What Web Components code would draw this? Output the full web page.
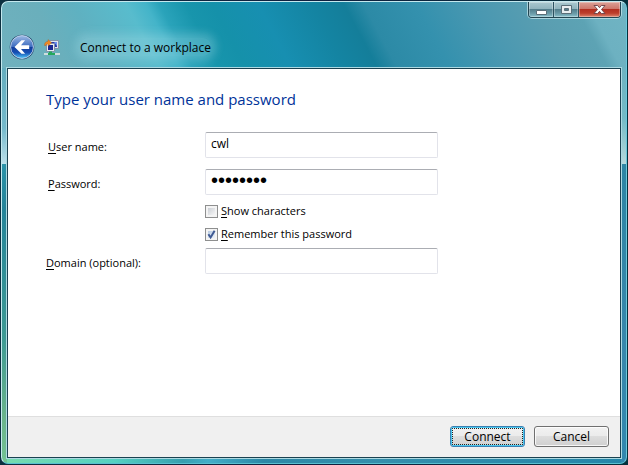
<!DOCTYPE html>
<html lang="en">
<head>
<meta charset="utf-8">
<title>Connect to a workplace</title>
<style>
    html, body {
        height: 100%;
        margin: 0;
    }
    body {
        background: linear-gradient(90deg, #0c3040, #102040 50%, #04303c);
        font: 12px/16px "Open Sans", "Noto Sans", sans-serif;
        color: #000;
    }
</style>
</head>
<body>
<aero-window>
    <nav-header slot="title">Connect to a workplace</nav-header>
    <window-controls slot="controls"></window-controls>
    <credentials-form heading="Type your user name and password"></credentials-form>
    <command-button slot="actions" primary>Connect</command-button>
    <command-button slot="actions">Cancel</command-button>
</aero-window>

<script>
// Glass frame with a title area, a white client area and a command bar
class AeroWindow extends HTMLElement {
    constructor() {
        super();
        this.attachShadow({ mode: 'open' });
    }

    connectedCallback() {
        this.shadowRoot.innerHTML = `
            <style>
                :host {
                    display: block;
                    height: 100%;
                    box-sizing: border-box;
                    padding: 1px;
                }
                .frame {
                    display: flex;
                    flex-direction: column;
                    height: 100%;
                    box-sizing: border-box;
                    border: 1px solid #c4e8ee;
                    border-right-color: #6cc8dc;
                    border-bottom-color: #58c0d0;
                    border-radius: 7px;
                    padding: 0 4px 4px;
                    background:
                        linear-gradient(62deg, #70b1be 0, #6aafbc 10%, #5fb1c1 16%, #58bccd 24%, #44b4c9 27%, #2aa3ba 29%, #1895ac 33%, #1591aa 37%, #178fb1 44%, #1484a2 52%, #147e9a 57%, #2c8aa6 60%, #3491ae 68%, #4a98b1 77%, #5a9eb1 86%, #5da3b4 92%, #6db1c1 94%, #70b4c3) 0 0 / 100% 66px no-repeat,
                        linear-gradient(#64adbe, #74b9cb 60px, #bce0eb 96px, #2b93a9 96px, #24849a 140px, #3d9a94 270px, #6ab48b 350px, #80d8a0) 0 66px / 5px 100% no-repeat,
                        linear-gradient(#6db3c1, #74bac6 50px, #b4d8dc 96px, #2d85a4 96px, #3887ac 60%, #2e87b0) 100% 66px / 5px 100% no-repeat,
                        linear-gradient(90deg, #78dcae, #55d1c1 18%, #379faf 29%, #43aec8 33%, #2c88a6 42%, #358fac 60%, #2586a9);
                }
                .top {
                    display: flex;
                    justify-content: space-between;
                    align-items: flex-start;
                    height: 65px;
                }
                .client {
                    flex: 1;
                    display: flex;
                    flex-direction: column;
                    border: 1px solid #1b4251;
                    outline: 1px solid #acd9e2;
                    margin: 1px;
                    background: #fff;
                }
                main {
                    flex: 1;
                }
                footer {
                    display: flex;
                    justify-content: flex-end;
                    gap: 9px;
                    padding: 9px 11px 10px;
                    border-top: 1px solid #dfdfdf;
                    background: #f0f0f0;
                }
            </style>
            <div class="frame">
                <div class="top">
                    <slot name="title"></slot>
                    <slot name="controls"></slot>
                </div>
                <div class="client">
                    <main><slot></slot></main>
                    <footer><slot name="actions"></slot></footer>
                </div>
            </div>
        `;
    }
}

class NavHeader extends HTMLElement {
    constructor() {
        super();
        this.attachShadow({ mode: 'open' });
    }

    connectedCallback() {
        this.shadowRoot.innerHTML = `
            <style>
                :host {
                    display: flex;
                    align-items: center;
                    align-self: flex-end;
                    padding: 0 0 7px 3px;
                }
                button {
                    width: 26px;
                    height: 26px;
                    padding: 0;
                    border: 0;
                    background: none;
                }
                svg {
                    display: block;
                }
                .place {
                    margin-left: 9px;
                }
                .title {
                    margin-left: 20px;
                    padding-top: 2px;
                    border-radius: 8px;
                    background: rgba(170, 222, 232, .3);
                    box-shadow: 0 0 8px 5px rgba(170, 222, 232, .3);
                }
            </style>
            <button type="button" aria-label="Back">
                <svg width="26" height="26" viewBox="0 0 26 26">
                    <defs>
                        <linearGradient id="ball" x2="0" y2="1">
                            <stop offset="0" stop-color="#9db9e4"/>
                            <stop offset=".48" stop-color="#3f6dc0"/>
                            <stop offset=".5" stop-color="#123c9c"/>
                            <stop offset=".75" stop-color="#1750b4"/>
                            <stop offset="1" stop-color="#4fc8f8"/>
                        </linearGradient>
                    </defs>
                    <circle cx="13" cy="13" r="12.3" fill="#26466f"/>
                    <circle cx="13" cy="13" r="11.4" fill="url(#ball)" stroke="#c4d8ee" stroke-width=".9"/>
                    <path d="M5.5 13 12.5 6.3h3.6L12 11.2h8.2v3.7H12l4.1 4.8h-3.6z" fill="#fff"/>
                </svg>
            </button>
            <svg class="place" width="16" height="17" viewBox="0 0 16 17">
                <path d="M5.5 1.5h9v8h-9z" fill="#dfe4ee" stroke="#8490aa"/>
                <path d="M7 3h6v5H7z" fill="#2638a8"/>
                <path d="M2.5 4.5h8v8h-8z" fill="#e8ebf2" stroke="#8490aa"/>
                <path d="M4 6h5v5H4z" fill="#1c2790"/>
                <path d="M10 3h3v4z" fill="#6f8ff0"/>
                <path d="M.5 6.5C.5 3.5 2 2.5 4 2.5V.6L7.6 3.8 4 7V5C2.6 5 2 5.5 2 6.5z" fill="#f08a26" stroke="#a85b18" stroke-width=".4"/>
                <path d="M0 14h16v2H0z" fill="#cfdede"/>
                <path d="M5 12.5h3V14h3v2H4v-2h1z" fill="#26a85a"/>
            </svg>
            <span class="title"><slot></slot></span>
        `;
    }
}

class WindowControls extends HTMLElement {
    constructor() {
        super();
        this.attachShadow({ mode: 'open' });
    }

    connectedCallback() {
        this.shadowRoot.innerHTML = `
            <style>
                :host {
                    display: flex;
                    height: 15px;
                    margin-right: 1px;
                    border: 1px solid #234652;
                    border-top: 0;
                    border-radius: 0 0 4px 4px;
                    box-shadow: 0 0 0 1px rgba(200, 232, 238, .7);
                    overflow: hidden;
                }
                button {
                    display: flex;
                    align-items: center;
                    justify-content: center;
                    width: 25px;
                    padding: 0;
                    border: 0;
                    border-right: 1px solid #2c5260;
                    background: linear-gradient(#a9c8cf, #8eb2bc 48%, #537f8d 50%, #6d9eab 80%, #8dc3ce);
                    box-shadow: inset 0 0 0 1px rgba(255, 255, 255, .3);
                }
                .close {
                    width: 41px;
                    border-right: 0;
                    background: linear-gradient(#dba197, #cd7468 48%, #b32f20 50%, #bd3f2c 75%, #dd8770);
                }
            </style>
            <button type="button" aria-label="Minimize">
                <svg width="13" height="13"><path d="M1.5 7.5h10v4h-10z" fill="#fff" stroke="#5a6e78"/></svg>
            </button>
            <button type="button" aria-label="Maximize">
                <svg width="13" height="13"><path d="M1.5 2.5h10v8h-10zM4.5 5.5v2h4v-2z" fill="#e8eef0" fill-rule="evenodd" stroke="#5a6e78"/></svg>
            </button>
            <button type="button" class="close" aria-label="Close">
                <svg width="13" height="13"><path d="M1 2.5h3.6l1.9 2.2 1.9-2.2H12L8.5 6.5l3.5 4H8.4L6.5 8.3l-1.9 2.2H1l3.5-4z" fill="#fff" stroke="#6a3f45" stroke-width=".9"/></svg>
            </button>
        `;
    }
}

class CredentialsForm extends HTMLElement {
    constructor() {
        super();
        this.attachShadow({ mode: 'open' });
    }

    connectedCallback() {
        const heading = this.getAttribute('heading') || '';

        this.shadowRoot.innerHTML = `
            <style>
                :host {
                    display: block;
                    padding: 19px 38px;
                }
                h1 {
                    margin: 0 0 22px;
                    font-size: 15px;
                    line-height: 22px;
                    font-weight: 400;
                    color: #003399;
                }
                form {
                    display: flex;
                    flex-direction: column;
                    gap: 11px;
                }
                .options {
                    display: flex;
                    flex-direction: column;
                    gap: 7px;
                    margin: -3px 0 -5px 159px;
                }
            </style>
            <h1>${heading}</h1>
            <form>
                <form-field label="User name:" value="cwl" indent></form-field>
                <form-field label="Password:" type="password" value="password" indent></form-field>
                <div class="options">
                    <check-option label="Show characters"></check-option>
                    <check-option label="Remember this password" checked></check-option>
                </div>
                <form-field label="Domain (optional):"></form-field>
            </form>
        `;
    }
}

function accessLabel(text) {
    return `<u>${text.charAt(0)}</u>${text.slice(1)}`;
}

class FormField extends HTMLElement {
    constructor() {
        super();
        this.attachShadow({ mode: 'open' });
    }

    connectedCallback() {
        const label = this.getAttribute('label') || '';
        const type = this.getAttribute('type') || 'text';
        const value = this.getAttribute('value') || '';

        this.shadowRoot.innerHTML = `
            <style>
                :host {
                    display: grid;
                    grid-template-columns: 159px minmax(0, 233px);
                    align-items: center;
                }
                label {
                    padding-top: 4px;
                    font-size: 11px;
                }
                :host([indent]) label {
                    padding-left: 2px;
                }
                u {
                    text-underline-offset: 2px;
                }
                input {
                    box-sizing: border-box;
                    width: 100%;
                    height: 26px;
                    padding: 0 5px 4px;
                    border: 1px solid #e2e3ea;
                    border-top-color: #abadb3;
                    border-radius: 2px;
                    outline: 0;
                    background: #fff;
                    font: inherit;
                    color: inherit;
                }
                input[type="password"] {
                    font-family: "Liberation Sans", sans-serif;
                    font-size: 20px;
                }
            </style>
            <label for="field">${accessLabel(label)}</label>
            <input id="field" type="${type}" value="${value}">
        `;
    }
}

class CheckOption extends HTMLElement {
    constructor() {
        super();
        this.attachShadow({ mode: 'open' });
    }

    connectedCallback() {
        const label = this.getAttribute('label') || '';
        const checked = this.hasAttribute('checked') ? 'checked' : '';

        this.shadowRoot.innerHTML = `
            <style>
                :host {
                    display: flex;
                    align-items: center;
                    gap: 3px;
                    font-size: 11px;
                }
                input {
                    appearance: none;
                    box-sizing: border-box;
                    width: 13px;
                    height: 13px;
                    margin: 0;
                    border: 1px solid #8e8f8f;
                    background: linear-gradient(135deg, #cbcfd5, #f6f6f6) content-box, #f4f4f4;
                    padding: 2px;
                }
                input:checked {
                    background:
                        url('data:image/svg+xml,<svg xmlns="http://www.w3.org/2000/svg" viewBox="0 0 11 11"><path d="M2.4 5.2 4.6 8.5 8.6 1.8" fill="none" stroke="%233f5a94" stroke-width="2"/></svg>') border-box center / 11px no-repeat,
                        linear-gradient(135deg, #b9cbe2, #eef3fa) content-box, #f4f4f4;
                }
                u {
                    text-underline-offset: 2px;
                }
            </style>
            <input id="option" type="checkbox" ${checked}>
            <label for="option">${accessLabel(label)}</label>
        `;
    }
}

class CommandButton extends HTMLElement {
    constructor() {
        super();
        this.attachShadow({ mode: 'open' });
    }

    connectedCallback() {
        this.shadowRoot.innerHTML = `
            <style>
                :host {
                    display: block;
                }
                button {
                    box-sizing: border-box;
                    width: 75px;
                    height: 21px;
                    padding: 0;
                    border: 1px solid #707070;
                    border-radius: 3px;
                    background: linear-gradient(#f2f2f2, #ebebeb 49%, #dddddd 50%, #cfcfcf);
                    box-shadow: inset 0 0 0 1px rgba(255, 255, 255, .8);
                    font: inherit;
                    color: inherit;
                }
                :host([primary]) button {
                    border-color: #3c7fb1;
                    box-shadow: inset 0 0 0 1px #48c8f0;
                    outline: 1px dotted #222;
                    outline-offset: -3px;
                }
            </style>
            <button type="button"><slot></slot></button>
        `;
    }
}

customElements.define('aero-window', AeroWindow);
customElements.define('nav-header', NavHeader);
customElements.define('window-controls', WindowControls);
customElements.define('form-field', FormField);
customElements.define('check-option', CheckOption);
customElements.define('credentials-form', CredentialsForm);
customElements.define('command-button', CommandButton);
</script>
</body>
</html>
